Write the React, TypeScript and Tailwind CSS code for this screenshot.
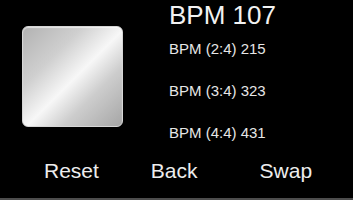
const rows = [
  { label: 'BPM (2:4)', value: 215 },
  { label: 'BPM (3:4)', value: 323 },
  { label: 'BPM (4:4)', value: 431 },
];

export default function App() {
  return (
    <div
      className="flex h-[200px] w-[353px] flex-col overflow-hidden border-b-2 border-[#4d4d4d] bg-black text-[#f2f2f2]"
      style={{ fontFamily: '"Liberation Sans", Arial, sans-serif' }}
    >
      <div className="flex h-[160px]">
        <div className="w-[169px] pl-[22px] pt-[26px]">
          <div className="h-[101px] w-[101px] rounded-[6px] border border-[#d6d6d6] bg-[linear-gradient(135deg,#b2b2b2_0%,#cfcfcf_30%,#f7f7f7_52%,#cdcdcd_70%,#a6a6a6_100%)] shadow-[inset_0_1px_1px_rgba(255,255,255,0.6)]" />
        </div>
        <div className="flex flex-col pt-[2px]">
          <div className="text-[26px] leading-[26px]">BPM 107</div>
          <div className="mt-[13px] flex flex-col gap-[27px] text-[15px] leading-[15px] text-[#e6e6e6]">
            {rows.map((r) => (
              <div key={r.label}>
                {r.label} {r.value}
              </div>
            ))}
          </div>
        </div>
      </div>
      <div className="flex pl-[44px] text-[21px] leading-[21px] text-[#ededed]">
        <button>Reset</button>
        <button className="ml-[52px]">Back</button>
        <button className="ml-[62px]">Swap</button>
      </div>
    </div>
  );
}
